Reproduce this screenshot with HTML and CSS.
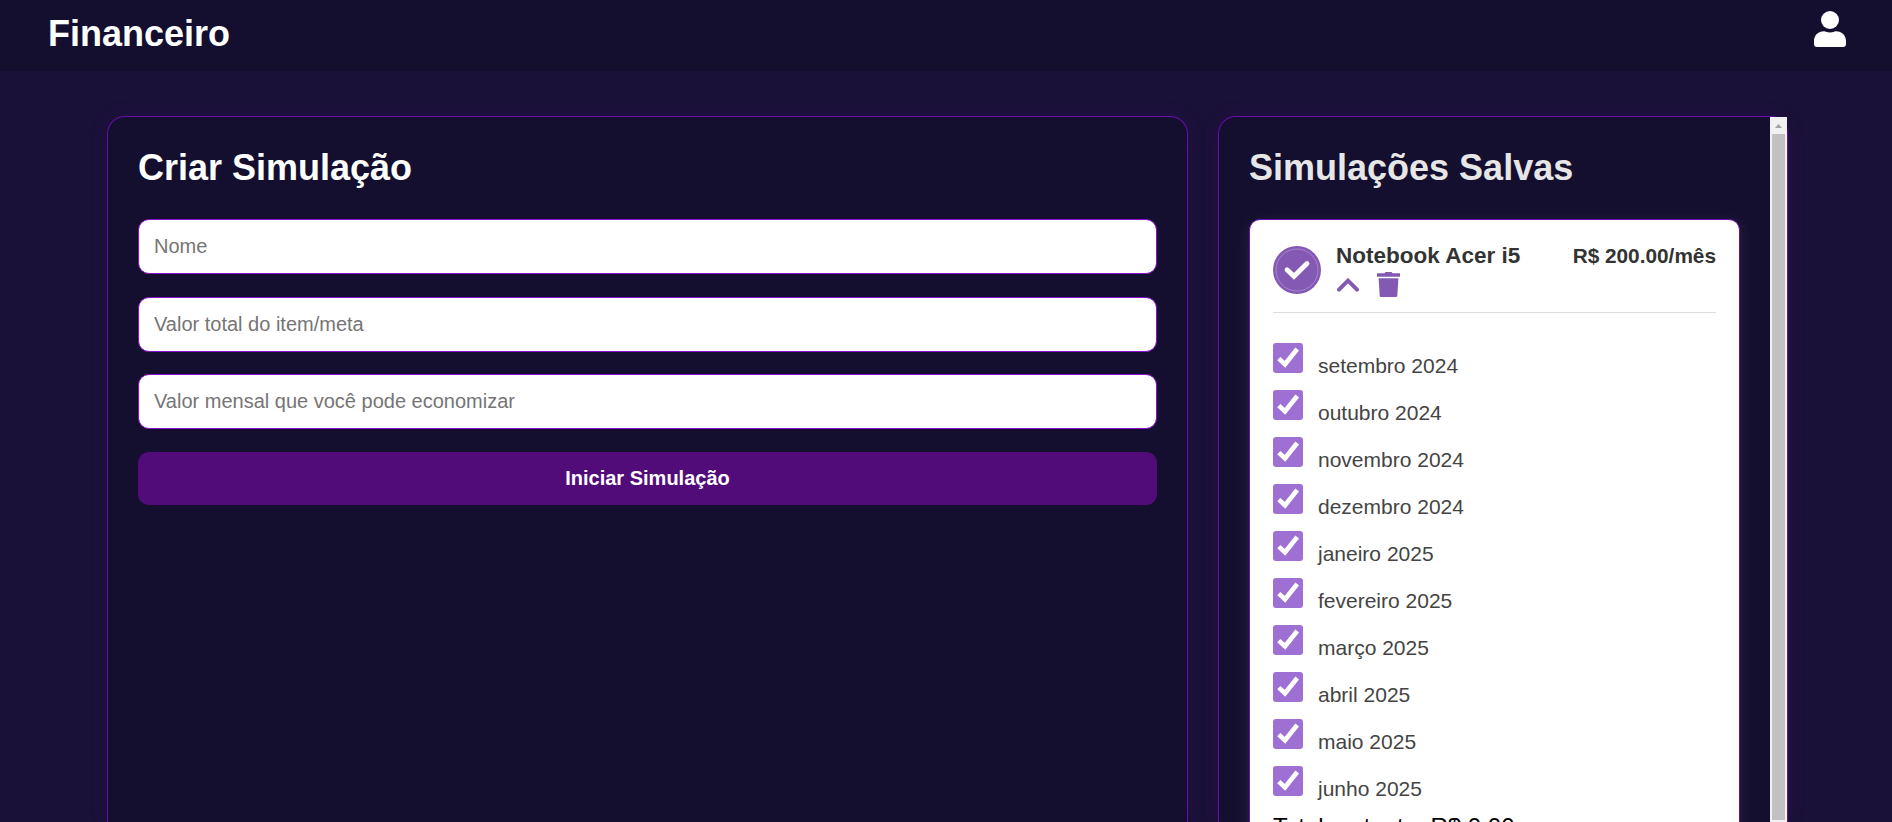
FILE: index.html
```html
<!DOCTYPE html>
<html lang="pt-BR">
<head>
<meta charset="utf-8">
<title>Financeiro</title>
<link rel="stylesheet" href="styles.css">
</head>
<body>
<svg class="sprite" aria-hidden="true">
  <symbol id="tick" viewBox="0 0 30 30"><path d="M5.8 15.6 L12 21.3 L24.2 6" fill="none" stroke="#fff" stroke-width="4.6"/></symbol>
</svg>
<header class="topbar">
  <h1 class="brand">Financeiro</h1>
  <svg class="user" viewBox="0 0 32 36"><circle cx="16" cy="9" r="9" fill="#fff"/><path d="M10 20.2 C12 20.2 13 21.5 16 21.5 S20 20.2 22 20.2 C28 20.2 32 24.5 32 30 V33 Q32 36 29 36 H3 Q0 36 0 33 V30 C0 24.5 4 20.2 10 20.2Z" fill="#fff"/></svg>
</header>
<main class="content">
  <section class="panel create">
    <h2 class="title">Criar Simulação</h2>
    <form class="form">
      <input class="field" placeholder="Nome">
      <input class="field" placeholder="Valor total do item/meta">
      <input class="field" placeholder="Valor mensal que você pode economizar">
      <button class="submit" type="button">Iniciar Simulação</button>
    </form>
  </section>
  <section class="panel saved">
    <div class="saved-body">
      <h2 class="title muted">Simulações Salvas</h2>
      <article class="card">
        <div class="card-head">
          <svg class="badge" viewBox="0 0 48 48"><circle cx="24" cy="24" r="24" fill="#8459b3"/><circle cx="24" cy="24" r="21" fill="none" stroke="#ad8fd0" stroke-width=".8"/><path d="M14 23.7 L21 30.3 L34 17.5" fill="none" stroke="#fff" stroke-width="4.8" stroke-linecap="round"/></svg>
          <div class="item">
            <h3 class="item-name">Notebook Acer i5</h3>
            <div class="actions">
              <svg class="chevron" viewBox="0 0 22 14"><path d="M2 11.7 L11 2.7 L20 11.7" fill="none" stroke="#8459b3" stroke-width="4" stroke-linecap="round"/></svg>
              <svg class="trash" viewBox="0 0 23 25"><path d="M0 1.3H7.4L8.5 0H14.5L15.6 1.3H23V4.7H0ZM1.6 6.3H21.4L20.3 23.8Q20.2 25 19 25H4Q2.8 25 2.7 23.8Z" fill="#8459b3"/></svg>
            </div>
          </div>
          <span class="price">R$ 200.00/mês</span>
        </div>
        <ul class="months">
          <li class="month"><svg class="box"><use href="#tick"/></svg><span>setembro 2024</span></li>
          <li class="month"><svg class="box"><use href="#tick"/></svg><span>outubro 2024</span></li>
          <li class="month"><svg class="box"><use href="#tick"/></svg><span>novembro 2024</span></li>
          <li class="month"><svg class="box"><use href="#tick"/></svg><span>dezembro 2024</span></li>
          <li class="month"><svg class="box"><use href="#tick"/></svg><span>janeiro 2025</span></li>
          <li class="month"><svg class="box"><use href="#tick"/></svg><span>fevereiro 2025</span></li>
          <li class="month"><svg class="box"><use href="#tick"/></svg><span>março 2025</span></li>
          <li class="month"><svg class="box"><use href="#tick"/></svg><span>abril 2025</span></li>
          <li class="month"><svg class="box"><use href="#tick"/></svg><span>maio 2025</span></li>
          <li class="month"><svg class="box"><use href="#tick"/></svg><span>junho 2025</span></li>
        </ul>
        <p class="total">Total restante: R$ 0.00</p>
      </article>
    </div>
    <div class="scroll"><svg class="arrow" viewBox="0 0 7 4"><path d="M0 4L3.5 0L7 4Z" fill="#a3a3a3"/></svg><div class="thumb"></div></div>
  </section>
</main>
</body>
</html>
```
FILE: styles.css
```css
* { box-sizing: border-box; margin: 0; padding: 0; }
body {
  height: 822px;
  display: flex;
  flex-direction: column;
  overflow: hidden;
  background: #1a1138;
  font-family: "Liberation Sans", Arial, sans-serif;
}
.sprite { display: none; }
.topbar {
  height: 71px;
  flex: none;
  display: flex;
  justify-content: space-between;
  align-items: flex-start;
  padding: 11px 46px 0 48px;
  background: #140e2f;
}
.brand, .title { font-size: 36px; line-height: 44px; font-weight: bold; color: #fff; }
.brand { padding-top: 1px; }
.user { width: 32px; height: 36px; }
.content {
  flex: 1;
  min-height: 0;
  display: grid;
  grid-template-columns: 1081px 570px;
  gap: 30px;
  padding: 45px 0 0 107px;
}
.panel {
  height: 706px;
  border: 1px solid #6a0dad;
  border-bottom: 0;
  border-radius: 18px 18px 0 0;
  background: #140e2f;
  box-shadow: 0 0 20px rgba(106, 13, 173, .1);
}
.create { padding: 29px 30px 0; }
.title { margin-bottom: 29px; }
.muted { color: #e6e6e6; }
.form { display: flex; flex-direction: column; gap: 22.5px; }
.field, .submit { width: 100%; font-family: inherit; font-size: 20px; border-radius: 11px; }
.field {
  height: 55px;
  padding: 0 15px;
  border: 1px solid #8a0fd0;
  background: #fff;
}
.field::placeholder { color: #757575; }
.submit {
  height: 53px;
  border: 0;
  background: #520c7a;
  color: #fff;
  font-weight: bold;
}
.saved { display: flex; }
.saved-body { flex: 1; padding: 29px 30px 0; overflow: hidden; }
.card {
  height: 800px;
  padding: 20px 23px 0 23px;
  border: 1px solid #6a0dad;
  border-radius: 11px;
  background: #fff;
  box-shadow: 0 4px 15px rgba(255, 255, 255, .1);
}
.card-head {
  height: 73px;
  display: flex;
  border-bottom: 1px solid #ddd;
}
.badge { width: 48px; height: 48px; margin: 6px 15px 0 0; flex: none; }
.item { flex: 1; }
.item-name { font-size: 22.5px; line-height: 30px; padding-top: 1px; color: #333; }
.actions { display: flex; align-items: center; gap: 18px; padding-left: 1px; margin-top: 1px; }
.chevron { width: 22px; height: 14px; }
.trash { width: 23px; height: 25px; }
.price { font-size: 20.8px; line-height: 32px; font-weight: bold; color: #333; }
.months { list-style: none; padding-top: 30px; }
.month { height: 47px; display: flex; gap: 15px; font-size: 21px; line-height: 24px; color: #444; }
.month span { padding-top: 11px; }
.box { width: 30px; height: 30px; border-radius: 3px; background: #9f70d3; }
.total { font-size: 24px; line-height: 28px; color: #000; }
.scroll {
  width: 17px;
  display: flex;
  flex-direction: column;
  align-items: center;
  background: #f1f1f1;
  padding: 7px 0 2px;
}
.arrow { width: 7px; height: 4px; margin-bottom: 6px; flex: none; }
.thumb { width: 13px; flex: 1; background: #c1c1c1; }
```
